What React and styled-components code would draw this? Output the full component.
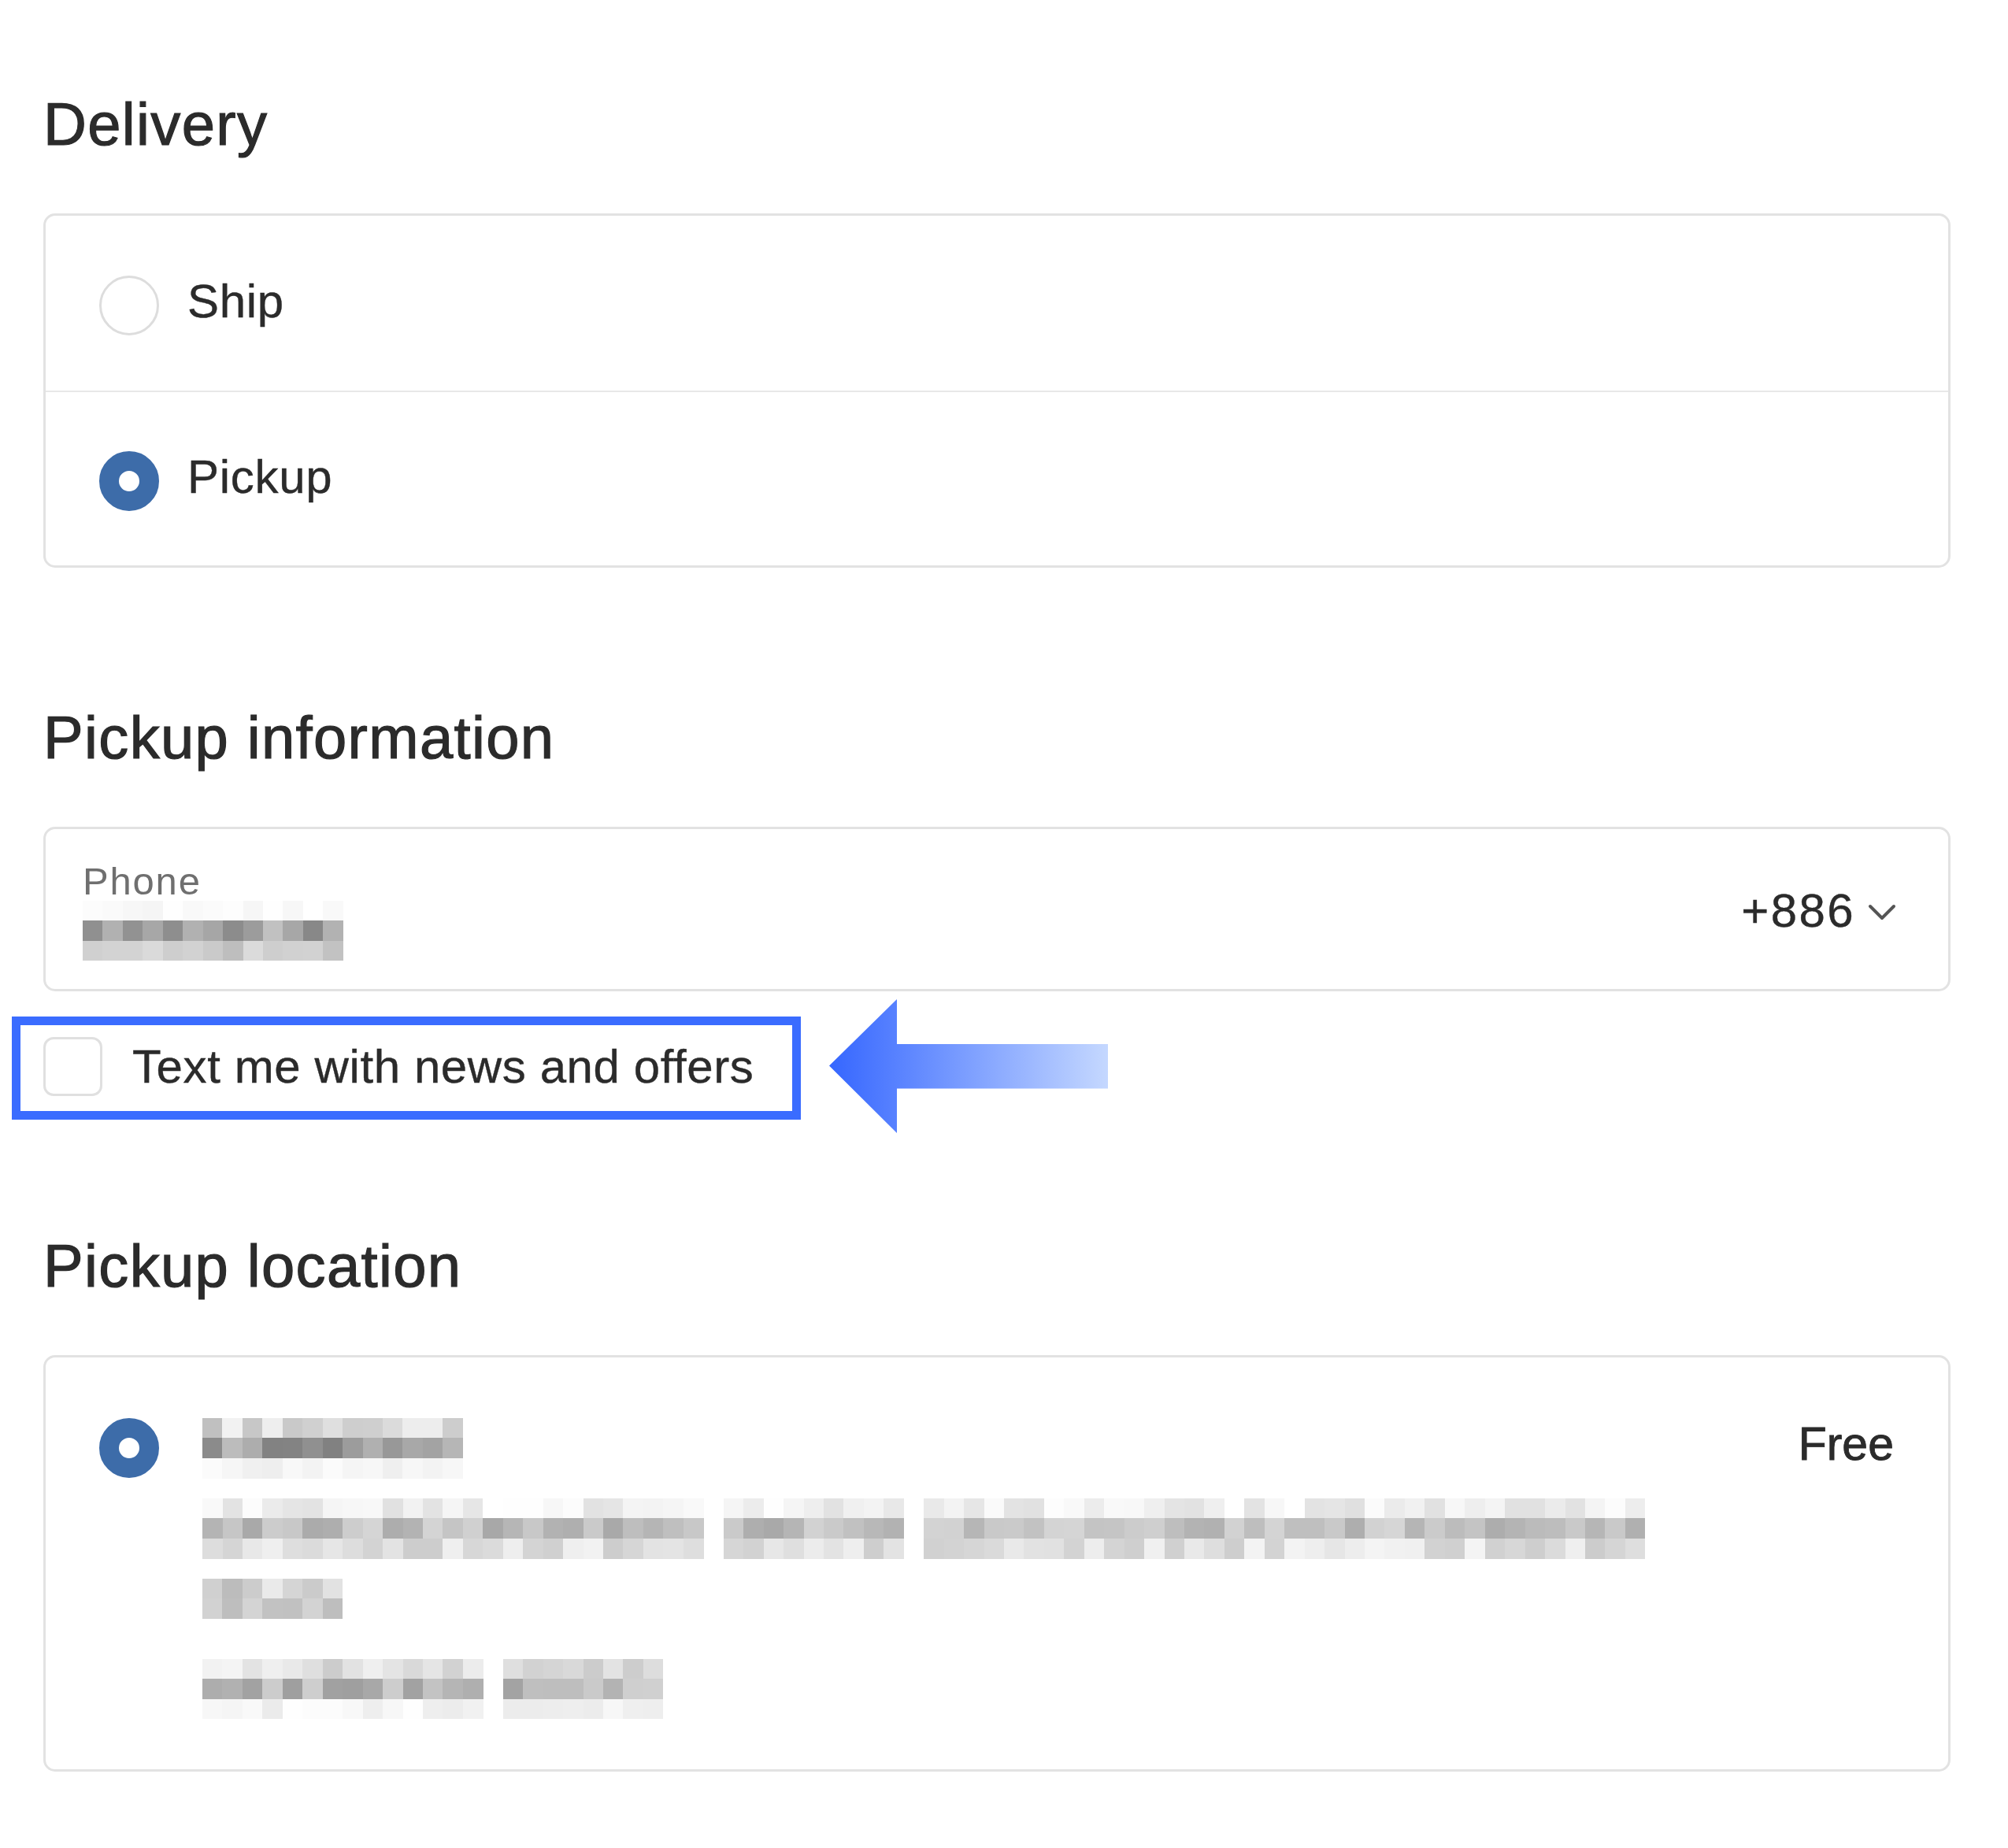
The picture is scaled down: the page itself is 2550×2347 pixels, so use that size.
import React from 'react';
import styled, { createGlobalStyle } from 'styled-components';

const GlobalStyle = createGlobalStyle`
  html, body { margin: 0; padding: 0; background: #ffffff; }
  body {
    font-family: "Liberation Sans", Arial, Helvetica, sans-serif;
    color: #303030;
    -webkit-font-smoothing: antialiased;
  }
  * { box-sizing: border-box; }
`;

/* ---------- pixelated (redacted) text ---------- */
const CELL = 25.45;

function makeCells(seed, cols, rowRanges, gaps = []) {
  let s = seed;
  const rnd = () => {
    s = (s * 1103515245 + 12345) % 2147483648;
    return s / 2147483648;
  };
  return rowRanges.map((range) =>
    Array.from({ length: cols }, (_, c) => {
      const r = rnd();
      if (!range || gaps.includes(c)) return null;
      const [lo, hi] = range;
      return Math.round(255 * (lo + (hi - lo) * r));
    })
  );
}

const REDACTED = {
  phone: makeCells(17, 13, [[0.96, 1], [0.52, 0.76], [0.72, 0.86]]),
  name: makeCells(41, 13, [[0.74, 0.95], [0.5, 0.74], [0.93, 0.99]]),
  address: makeCells(93, 72, [[0.88, 1], [0.66, 0.84], [0.8, 0.96]], [25, 35]),
  city: makeCells(7, 7, [[0.66, 0.92], [0.74, 0.83], null]),
  hours: makeCells(58, 23, [[0.78, 0.99], [0.62, 0.82], [0.92, 1]], [14]),
};

const MosaicSvg = styled.svg`
  display: block;
  flex: none;
`;

function Mosaic({ cells }) {
  const cols = cells[0].length;
  const rows = cells.length;
  return (
    <MosaicSvg
      width={cols * CELL}
      height={rows * CELL}
      viewBox={`0 0 ${cols * CELL} ${rows * CELL}`}
      shapeRendering="crispEdges"
      aria-hidden="true"
    >
      {cells.map((row, r) =>
        row.map((v, c) =>
          v == null ? null : (
            <rect
              key={`${r}-${c}`}
              x={c * CELL}
              y={r * CELL}
              width={CELL + 0.5}
              height={CELL + 0.5}
              fill={`rgb(${v},${v},${v})`}
            />
          )
        )
      )}
    </MosaicSvg>
  );
}

/* ---------- layout ---------- */
const Page = styled.main`
  width: 2550px;
  min-height: 2347px;
  padding: 120px 73px 94px 55px;
`;

const Section = styled.section`
  & + & { margin-top: 178px; }
`;

const Heading = styled.h2`
  margin: 0 0 75px;
  font-size: 76px;
  line-height: 76px;
  font-weight: 400;
  letter-spacing: 1.35px;
  color: #2b2b2b;
  -webkit-text-stroke: 1.2px #2b2b2b;
`;

const Card = styled.div`
  border: 3px solid #e2e2e2;
  border-radius: 15px;
  background: #fff;
  overflow: hidden;
`;

const OptionRow = styled.label`
  display: flex;
  align-items: center;
  gap: 36px;
  height: 222px;
  padding-left: 68px;
  & + & { border-top: 2px solid #e8e8e8; }
`;

const Radio = styled.span`
  flex: none;
  width: 76px;
  height: 76px;
  border-radius: 50%;
  background: #fff;
  border: ${(p) => (p.$checked ? '25.5px solid #3d6ca9' : '3px solid #dddddd')};
  margin-top: ${(p) => p.$offset || 0}px;
`;

const OptionLabel = styled.span`
  font-size: 60px;
  line-height: 60px;
  letter-spacing: 0.7px;
  color: #2b2b2b;
  -webkit-text-stroke: 0.4px #2b2b2b;
  padding-bottom: 4px;
`;

const Field = styled.div`
  display: flex;
  align-items: center;
  justify-content: space-between;
  border: 3px solid #e2e2e2;
  border-radius: 15px;
  padding: 41px 66px 36px 47px;
`;

const FieldBody = styled.div`
  display: flex;
  flex-direction: column;
`;

const FieldLabel = styled.span`
  font-size: 49px;
  line-height: 50px;
  letter-spacing: 1.8px;
  color: #6f6f6f;
`;

const CountryPicker = styled.span`
  display: flex;
  align-items: center;
  gap: 16px;
  font-size: 60px;
  line-height: 60px;
  letter-spacing: 2.4px;
  color: #2b2b2b;
  -webkit-text-stroke: 0.4px #2b2b2b;
`;

const Chevron = styled.svg`
  display: block;
  margin-top: 4px;
`;

const OptIn = styled.label`
  position: relative;
  display: flex;
  align-items: center;
  gap: 38px;
  height: 75px;
  margin-top: 58px;
  font-size: 60px;
  line-height: 60px;
  letter-spacing: 0.6px;
  color: #2b2b2b;
  -webkit-text-stroke: 0.4px #2b2b2b;
`;

const Checkbox = styled.span`
  flex: none;
  width: 75px;
  height: 75px;
  border: 3px solid #e0e0e0;
  border-radius: 13px;
  background: #fff;
`;

const Highlight = styled.span`
  position: absolute;
  left: -40px;
  top: -26px;
  width: 1002px;
  height: 131px;
  border: 11.5px solid #3a6cff;
  pointer-events: none;
`;

const Arrow = styled.svg`
  position: absolute;
  left: 998px;
  top: -48px;
  pointer-events: none;
`;

const LocationCard = styled.div`
  display: grid;
  grid-template-columns: 76px 1fr auto;
  column-gap: 55px;
  align-items: start;
  border: 3px solid #e2e2e2;
  border-radius: 15px;
  padding: 77px 69px 64px 68px;
`;

const LocationLines = styled.div`
  display: flex;
  flex-direction: column;
  gap: 25.5px;
`;

const Line = styled.div`
  height: 76.35px;
`;

const Price = styled.span`
  margin-top: 3px;
  font-size: 59px;
  line-height: 60px;
  color: #2b2b2b;
  -webkit-text-stroke: 0.9px #2b2b2b;
`;

export default function App() {
  return (
    <>
      <GlobalStyle />
      <Page>
        <Section>
          <Heading>Delivery</Heading>
          <Card>
            <OptionRow>
              <Radio $offset={6} />
              <OptionLabel>Ship</OptionLabel>
            </OptionRow>
            <OptionRow>
              <Radio $checked $offset={6} />
              <OptionLabel>Pickup</OptionLabel>
            </OptionRow>
          </Card>
        </Section>

        <Section>
          <Heading>Pickup information</Heading>
          <Field>
            <FieldBody>
              <FieldLabel>Phone</FieldLabel>
              <Mosaic cells={REDACTED.phone} />
            </FieldBody>
            <CountryPicker>
              +886
              <Chevron width="36" height="22" viewBox="0 0 36 22" aria-hidden="true">
                <polyline
                  points="3,3 18,18 33,3"
                  fill="none"
                  stroke="#555555"
                  strokeWidth="4"
                  strokeLinecap="round"
                  strokeLinejoin="round"
                />
              </Chevron>
            </CountryPicker>
          </Field>
          <OptIn>
            <Checkbox />
            Text me with news and offers
            <Highlight />
            <Arrow width="355" height="171" viewBox="0 0 355 171" aria-hidden="true">
              <defs>
                <linearGradient id="arrowFade" x1="0" y1="0" x2="1" y2="0">
                  <stop offset="0" stopColor="#3566ff" />
                  <stop offset="1" stopColor="#c5d8ff" />
                </linearGradient>
              </defs>
              <polygon
                points="0,84.5 86,0 86,57 354,57 354,113.5 86,113.5 86,170"
                fill="url(#arrowFade)"
              />
            </Arrow>
          </OptIn>
        </Section>

        <Section>
          <Heading>Pickup location</Heading>
          <LocationCard>
            <Radio $checked />
            <LocationLines>
              <Line><Mosaic cells={REDACTED.name} /></Line>
              <Line><Mosaic cells={REDACTED.address} /></Line>
              <Line><Mosaic cells={REDACTED.city} /></Line>
              <Line><Mosaic cells={REDACTED.hours} /></Line>
            </LocationLines>
            <Price>Free</Price>
          </LocationCard>
        </Section>
      </Page>
    </>
  );
}
